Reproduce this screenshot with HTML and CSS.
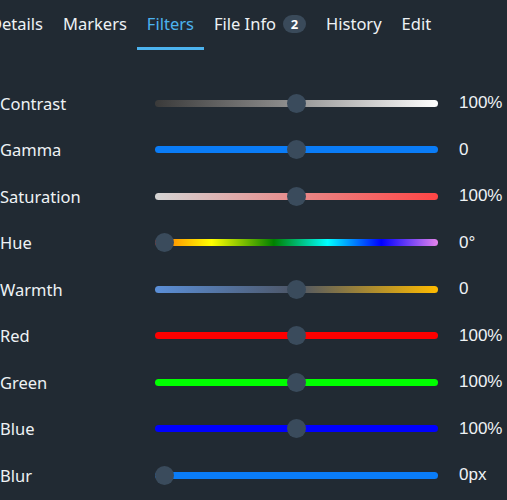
FILE: index.html
```html
<!DOCTYPE html>
<html lang="en">
<head>
  <meta charset="UTF-8" />
  <meta name="viewport" content="width=device-width, initial-scale=1.0"/>
  <title>Filters</title>
  <link rel="stylesheet" href="styles.css">
</head>
<body>
  <div class="panel">
    <nav class="tabs">
      <a class="tab">Details</a>
      <a class="tab">Markers</a>
      <a class="tab active">Filters</a>
      <a class="tab">File Info <span class="badge">2</span></a>
      <a class="tab">History</a>
      <a class="tab">Edit</a>
    </nav>

    <div class="filters">
      <label class="name">Contrast</label>
      <input type="range" class="slider contrast" min="0" max="200" value="100" />
      <span class="value">100%</span>

      <label class="name">Gamma</label>
      <input type="range" class="slider gamma" min="-100" max="100" value="0" />
      <span class="value">0</span>

      <label class="name">Saturation</label>
      <input type="range" class="slider saturation" min="0" max="200" value="100" />
      <span class="value">100%</span>

      <label class="name">Hue</label>
      <input type="range" class="slider hue" min="0" max="360" value="0" />
      <span class="value">0°</span>

      <label class="name">Warmth</label>
      <input type="range" class="slider warmth" min="-100" max="100" value="0" />
      <span class="value">0</span>

      <label class="name">Red</label>
      <input type="range" class="slider red" min="0" max="200" value="100" />
      <span class="value">100%</span>

      <label class="name">Green</label>
      <input type="range" class="slider green" min="0" max="200" value="100" />
      <span class="value">100%</span>

      <label class="name">Blue</label>
      <input type="range" class="slider blue" min="0" max="200" value="100" />
      <span class="value">100%</span>

      <label class="name">Blur</label>
      <input type="range" class="slider blur" min="0" max="20" value="0" />
      <span class="value">0px</span>
    </div>
  </div>
</body>
</html>
```

FILE: styles.css
```css
html, body {
  margin: 0;
  padding: 0;
  background: #212a33;
  overflow: hidden;
}
body {
  font-family: 'Noto Sans', 'Open Sans', sans-serif;
  color: #eef2f5;
}
.panel {
  width: 507px;
  height: 500px;
}
.tabs {
  display: flex;
  align-items: center;
  margin-left: -20px;
  height: 50px;
}
.tab {
  font-size: 16.5px;
  padding: 0 10px;
  height: 47px;
  line-height: 47px;
  border-bottom: 3px solid transparent;
  display: flex;
  align-items: center;
  gap: 7px;
  white-space: nowrap;
}
.tab.active {
  color: #4cb3ef;
  border-bottom-color: #4cb3ef;
}
.badge {
  display: inline-block;
  background: #3a4a5a;
  color: #fff;
  font-size: 13px;
  font-weight: bold;
  line-height: 18px;
  height: 18px;
  min-width: 23px;
  text-align: center;
  border-radius: 9px;
}
.filters {
  display: grid;
  grid-template-columns: 155px 283px auto;
  grid-auto-rows: 46.5px;
  align-items: center;
  margin-top: 30px;
}
.name {
  font-size: 16.5px;
}
.value {
  font-family: 'Liberation Sans', Arial, sans-serif;
  font-size: 17px;
  margin-left: 21px;
  white-space: nowrap;
}
.slider {
  -webkit-appearance: none;
  appearance: none;
  width: 283px;
  height: 19px;
  margin: 0;
  background: transparent;
}
.slider::-webkit-slider-runnable-track {
  height: 7px;
  border-radius: 4px;
  background: var(--track);
}
.slider::-webkit-slider-thumb {
  -webkit-appearance: none;
  width: 19px;
  height: 19px;
  margin-top: -6px;
  border-radius: 50%;
  background: #3a4b5c;
  border: none;
}
.contrast { --track: linear-gradient(to right, #3a3a3a, #8a8a8a 45%, #ffffff); }
.gamma { --track: #0a7cf7; }
.saturation { --track: linear-gradient(to right, #d4d4d4, #e88a8a 50%, #ff4545); }
.hue { --track: linear-gradient(to right, #ff2000, #ffa000 7%, #ffff00 20%, #008000 42%, #00ffff 61%, #0000ff 80%, #e684ec); }
.warmth { --track: linear-gradient(to right, #5b8fd8, #4d5565 50%, #ffbb00); }
.red { --track: #ff0000; }
.green { --track: #00ff00; }
.blue { --track: #0000ff; }
.blur { --track: #0a7cf7; }
```
